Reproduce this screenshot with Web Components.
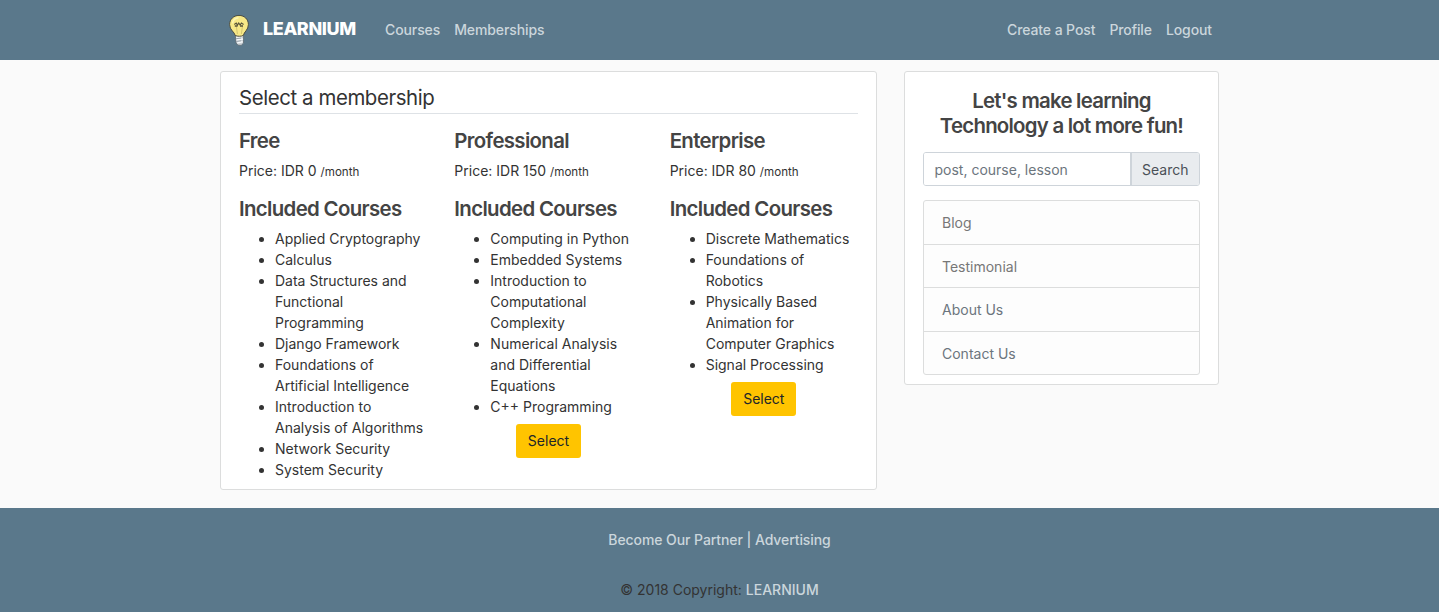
<!DOCTYPE html>
<html lang="en"><head><meta charset="utf-8"><title>Learnium</title>
<style>
body{margin:0;background:#fafafa;color:#333;font:14px/21px Inter,"Liberation Sans",sans-serif;height:612px;overflow:hidden}
</style></head><body>
<learn-app></learn-app>
<script>
const def=(name,css,html)=>customElements.define(name,class extends HTMLElement{
  constructor(){super();this.attachShadow({mode:'open'}).innerHTML=`<style>*{box-sizing:border-box}${css}</style>${typeof html==='function'?html(this):html}`}
});
def('bulb-logo',':host{display:block;width:20px;height:32px}svg{display:block}',`
<svg width="20" height="32" viewBox="0 0 20 32">
<path d="M6.3 20.5 14.2 20.5 14.6 29 12.2 31.4 9 31.2 7 29Z" fill="#c9d0d5" stroke="#5c6870" stroke-width=".8"/>
<path d="M7.2 23.2 13.7 22.4M7.4 26 14 25M8.4 28.8 13.6 27.8" stroke="#f5f8fa" stroke-width="1.5"/>
<path d="M7.4 24.7 12 24.1M7.7 27.4 12 26.8" stroke="#7b8790" stroke-width=".6"/>
<path d="M6.2 21.4C5.8 18.3.6 16 .6 10.6.6 5.1 4.7 1.4 10 1.4s9.4 3.8 9.4 9.2c0 5.2-4.4 7.3-5 10.8-2 1.1-6.1 1.2-8.2 0Z" fill="#f7e887" stroke="#4b4d43" stroke-width="1"/>
<path d="M3.5 9.4C4 6 6.5 4 9.5 3.7" fill="none" stroke="#fff6b4" stroke-width="1.4"/>
<path d="M8.4 20 7.4 12.6M12.4 20l1-7.4" stroke="#c9ba69" stroke-width=".8"/>
<path d="M5.3 10.4 7.2 9l1.2 2 1.3-2 1.4 2 1.3-2 2.2 1.4" fill="none" stroke="#57533a" stroke-width="1.2"/><path d="M5.8 12h2.8M11 12h3" stroke="#57533a" stroke-width="1.4"/>
</svg>`);
def('nav-link',':host{display:block;color:#cbd6dc;font-weight:500;white-space:nowrap;letter-spacing:-.1px}','<slot></slot>');
def('site-nav',`:host{display:block;background:#5a788b;height:60px}
.in{width:999px;margin-left:220px;height:60px;display:flex;align-items:center;padding:0 7px 0 9px}
.b{font-size:18px;font-weight:800;color:#fff;margin:-4px 29px 0 14px;width:93px;letter-spacing:-.38px;white-space:nowrap}
.l{display:flex;gap:14px;margin-top:-2px}.r{margin-left:auto}`,`<div class="in"><bulb-logo></bulb-logo><div class="b">LEARNIUM</div>
<div class="l"><nav-link>Courses</nav-link><nav-link>Memberships</nav-link></div>
<div class="l r"><nav-link>Create a Post</nav-link><nav-link>Profile</nav-link><nav-link>Logout</nav-link></div></div>`);
def('ui-card',':host{display:block;background:#fff;border:1px solid #dcdddd;border-radius:3px;box-sizing:border-box;padding:13px 18px 0}','<slot></slot>');
def('plan-column',`:host{display:block;white-space:nowrap}
h3{font-size:20.4px;line-height:25px;font-weight:600;color:#444;margin:0 0 7px;letter-spacing:-.65px}
p{margin:0 0 13px}small{font-size:11.6px}
ul{margin:0;padding:0 0 0 36px}
.b{text-align:center;padding-top:7px}
button{font:inherit;height:34px;width:65px;border:0;border-radius:3px;background:#ffc400;color:#212529;padding:0 0 2px;display:block;margin:auto}`,
h=>`<h3>${h.getAttribute('name')}</h3><p>Price: IDR ${h.getAttribute('price')} <small>/month</small></p><h3>Included Courses</h3>
<ul>${h.getAttribute('courses').split(';').map(c=>`<li>${c.replaceAll('|','<br>')}</li>`).join('')}</ul>${h.hasAttribute('selectable')?'<div class="b"><button>Select</button></div>':''}`);
def('membership-panel',`:host{display:block}ui-card{height:419px}
h2{font-size:20.4px;line-height:25px;font-weight:400;margin:0 0 14px;padding-bottom:3px;border-bottom:1px solid #dee2e6;letter-spacing:-.4px}
.g{display:grid;grid-template-columns:repeat(3,1fr);gap:27px}`,`<ui-card><h2>Select a membership</h2><div class="g">
<plan-column name="Free" price="0" courses="Applied Cryptography;Calculus;Data Structures and|Functional|Programming;Django Framework;Foundations of|Artificial Intelligence;Introduction to|Analysis of Algorithms;Network Security;System Security"></plan-column>
<plan-column name="Professional" price="150" selectable courses="Computing in Python;Embedded Systems;Introduction to|Computational|Complexity;Numerical Analysis|and Differential|Equations;C++ Programming"></plan-column>
<plan-column name="Enterprise" price="80" selectable courses="Discrete Mathematics;Foundations of|Robotics;Physically Based|Animation for|Computer Graphics;Signal Processing"></plan-column></div></ui-card>`);
def('search-box',`:host{display:flex;height:34px;border:1px solid #ced4da;border-radius:3px;overflow:hidden;box-sizing:border-box;line-height:21px;white-space:nowrap}
div{padding-top:6px}
.i{flex:1;color:#6c757d;background:#fff;padding-left:10.5px}.s{width:69.5px;border-left:2px solid #ced4da;background:#e9ecef;color:#495057;text-align:center}`,'<div class="i">post, course, lesson</div><div class="s">Search</div>');
def('side-list',`:host{display:block;height:175px;box-sizing:border-box;border:1px solid #dcdddd;border-radius:3px;background:#fdfdfd;overflow:hidden}`,'<slot></slot>');
def('side-item',`:host{display:block;height:43.5px;box-sizing:border-box;padding:11px 18px 0;border-bottom:1px solid #dcdddd;color:#777}:host(:last-child){border-bottom:0}:host([cool]){color:#6c757d}`,'<slot></slot>');
def('side-panel',`:host{display:block}ui-card{height:314px;padding-top:16px}
h3{font-size:20.4px;line-height:25.2px;font-weight:600;color:#444;margin:0 0 14px;text-align:center;letter-spacing:-.75px;white-space:nowrap}
side-list{margin-top:14px}`,`<ui-card><h3>Let's make learning<br>Technology a lot more fun!</h3><search-box></search-box>
<side-list><side-item>Blog</side-item><side-item>Testimonial</side-item><side-item cool>About Us</side-item><side-item cool>Contact Us</side-item></side-list></ui-card>`);
def('site-footer',`:host{display:block;background:#5a788b;height:104px;text-align:center;padding-top:21px;box-sizing:border-box}
b{font-weight:500;color:#cbd6dc}.p{letter-spacing:-.08px}.c{margin-top:29px}`,`<div><b class="p">Become Our Partner | Advertising</b></div><div class="c">© 2018 Copyright: <b>LEARNIUM</b></div>`);
def('learn-app',`:host{display:block}main{display:grid;grid-template-columns:657px 315px;gap:27px;align-items:start;padding:11px 0 0 220px;height:448px}`,
`<site-nav></site-nav><main><membership-panel></membership-panel><side-panel></side-panel></main><site-footer></site-footer>`);
</script></body></html>
